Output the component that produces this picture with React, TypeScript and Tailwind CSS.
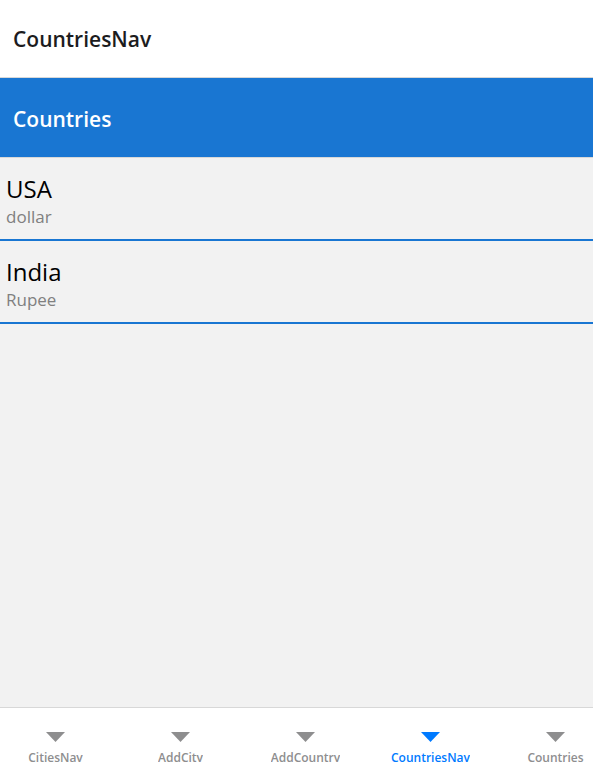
type Country = { name: string; currency: string };

const countries: Country[] = [
  { name: "USA", currency: "dollar" },
  { name: "India", currency: "Rupee" },
];

const tabs = ["CitiesNav", "AddCity", "AddCountry", "CountriesNav", "Countries"];

function Tab({ label, active }: { label: string; active: boolean }) {
  return (
    <a
      href="#"
      aria-current={active ? "page" : undefined}
      className={`flex min-w-0 flex-1 flex-col items-center pt-6 ${active ? "text-[#007aff]" : "text-[#8e8e8f]"}`}
    >
      <svg width="20" height="10" viewBox="0 0 20 10" fill="currentColor" aria-hidden="true">
        <path d="M0 0H19L9.5 10Z" />
      </svg>
      <span className="mt-2 h-3 overflow-hidden text-xs leading-4 font-semibold">{label}</span>
    </a>
  );
}

export default function App() {
  return (
    <div className="flex h-screen flex-col overflow-hidden bg-[#f2f2f2] font-['Open_Sans','Noto_Sans',sans-serif]">
      <header className="flex h-[78px] shrink-0 items-center border-b border-[#d8d8d8] bg-white px-[13px]">
        <h1 className="text-[21px] leading-7 font-semibold text-[#1c1c1e]">CountriesNav</h1>
      </header>
      <div className="flex h-20 shrink-0 items-center border-b border-[#d8d8d8] bg-[#1976d2] px-[13px] pt-0.5">
        <h2 className="text-[21px] leading-7 font-semibold text-white">Countries</h2>
      </div>
      <main className="min-h-0 flex-1 overflow-auto">
        <ul>
          {countries.map((c) => (
            <li key={c.name} className="h-[83px] border-b-2 border-[#1976d2] px-1.5 pt-[15px]">
              <p className="text-2xl leading-8 text-black">{c.name}</p>
              <p className="text-[17px] leading-6 text-[#808080]">{c.currency}</p>
            </li>
          ))}
        </ul>
      </main>
      <nav className="h-[58px] shrink-0 overflow-hidden border-t border-[#d8d8d8] bg-white">
        <div className="-mr-[25px] -ml-[7px] flex">
          {tabs.map((t) => (
            <Tab key={t} label={t} active={t === "CountriesNav"} />
          ))}
        </div>
      </nav>
    </div>
  );
}
